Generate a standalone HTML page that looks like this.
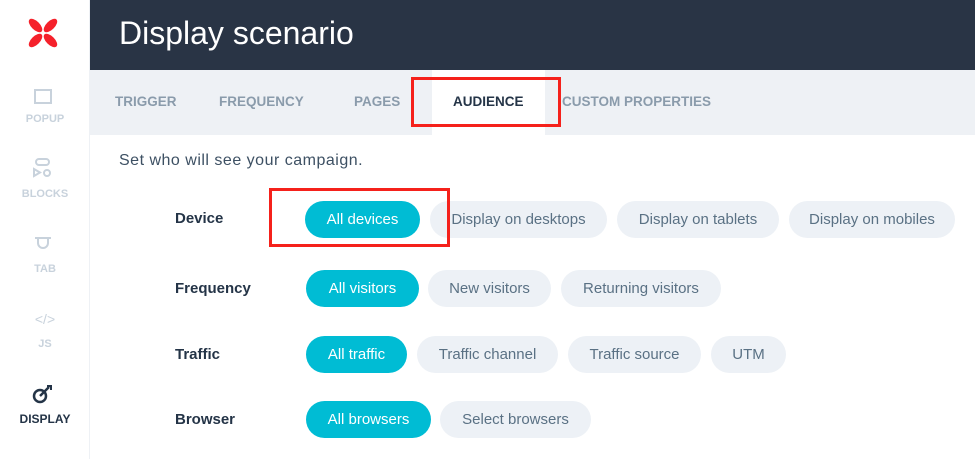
<!DOCTYPE html>
<html><head><style>
*{margin:0;padding:0;box-sizing:border-box}
body{width:975px;height:459px;overflow:hidden;background:#fff;font-family:"Liberation Sans",sans-serif;position:relative}
.abs{position:absolute}
.side{left:0;top:0;width:90px;height:459px;background:#fff;border-right:1px solid #eef1f5}
.si{position:absolute;left:0;width:90px;text-align:center;font-size:11px;font-weight:bold;color:#c8d2dc}
.hdr{left:90px;top:0;width:885px;height:70px;background:#293445;color:#fff;font-size:32px;padding-left:29px;line-height:66px}
.tabs{left:90px;top:70px;width:885px;height:65px;background:#eef1f5}
.tab{position:absolute;top:94px;font-size:13.5px;font-weight:bold;color:#8a9bab}
.pill{position:absolute;height:37px;border-radius:19px;background:#edf1f6;color:#5a7184;font-size:15px;line-height:38px;text-align:center}
.on{background:#00bcd4;color:#fff}
.lbl{position:absolute;left:175px;font-size:15px;font-weight:bold;color:#243447}
.red{position:absolute;border:3px solid #f5211b}
</style></head><body>
<div class="abs side"></div>
<svg class="abs" style="left:27px;top:17px" width="32" height="32" viewBox="0 0 30 30">
<g fill="#f5212b">
<ellipse cx="8" cy="8" rx="8" ry="4" transform="rotate(45 8 8)"/>
<ellipse cx="22" cy="8" rx="8" ry="4" transform="rotate(-45 22 8)"/>
<ellipse cx="8" cy="22" rx="8" ry="4" transform="rotate(-45 8 22)"/>
<ellipse cx="22" cy="22" rx="8" ry="4" transform="rotate(45 22 22)"/>
</g></svg>
<svg class="abs" style="left:34px;top:89px" width="18" height="16"><rect x="1" y="1" width="16" height="13" fill="none" stroke="#c8d2dc" stroke-width="2"/></svg>
<div class="si" style="top:113px">POPUP</div>
<svg class="abs" style="left:32px;top:158px" width="22" height="20" fill="none" stroke="#c8d2dc" stroke-width="2"><rect x="4" y="1" width="13" height="6" rx="3"/><path d="M2 11v7l6-3.5z"/><circle cx="15" cy="15" r="3"/></svg>
<div class="si" style="top:188px">BLOCKS</div>
<svg class="abs" style="left:34px;top:236px" width="18" height="14" fill="none" stroke="#c8d2dc" stroke-width="2"><path d="M1 2h16M4 2v5a5 5 0 0 0 10 0V2"/></svg>
<div class="si" style="top:263px">TAB</div>
<div class="si" style="top:311px;font-size:14px;font-weight:normal">&lt;/&gt;</div>
<div class="si" style="top:338px">JS</div>
<svg class="abs" style="left:32px;top:384px" width="22" height="20" fill="none" stroke="#243447" stroke-width="2.5"><circle cx="8" cy="12" r="6"/><path d="M8 12l9-9"/><path d="M15 2h4v4" stroke-width="2"/></svg>
<div class="si" style="top:412px;color:#243447;font-size:12px">DISPLAY</div>
<div class="abs hdr">Display scenario</div>
<div class="abs tabs"></div>
<div class="abs" style="left:432px;top:70px;width:113px;height:65px;background:#fff"></div>
<div class="tab" style="left:115px">TRIGGER</div>
<div class="tab" style="left:219px">FREQUENCY</div>
<div class="tab" style="left:354px">PAGES</div>
<div class="tab" style="left:453px;color:#243447">AUDIENCE</div>
<div class="tab" style="left:562px">CUSTOM PROPERTIES</div>
<div class="red" style="left:411px;top:77px;width:150px;height:50px"></div>
<div class="abs" style="left:119px;top:152px;font-size:16px;color:#3d5063;letter-spacing:0.5px">Set who will see your campaign.</div>
<div class="lbl" style="top:210px">Device</div>
<div class="pill on" style="left:305px;top:201px;width:115px">All devices</div>
<div class="pill" style="left:430px;top:201px;width:177px">Display on desktops</div>
<div class="pill" style="left:617px;top:201px;width:162px">Display on tablets</div>
<div class="pill" style="left:789px;top:201px;width:166px">Display on mobiles</div>
<div class="red" style="left:269px;top:188px;width:181px;height:59px"></div>
<div class="lbl" style="top:280px">Frequency</div>
<div class="pill on" style="left:306px;top:270px;width:113px">All visitors</div>
<div class="pill" style="left:428px;top:270px;width:123px">New visitors</div>
<div class="pill" style="left:561px;top:270px;width:160px">Returning visitors</div>
<div class="lbl" style="top:346px">Traffic</div>
<div class="pill on" style="left:306px;top:336px;width:101px">All traffic</div>
<div class="pill" style="left:417px;top:336px;width:141px">Traffic channel</div>
<div class="pill" style="left:568px;top:336px;width:133px">Traffic source</div>
<div class="pill" style="left:711px;top:336px;width:75px">UTM</div>
<div class="lbl" style="top:411px">Browser</div>
<div class="pill on" style="left:306px;top:401px;width:125px">All browsers</div>
<div class="pill" style="left:440px;top:401px;width:151px">Select browsers</div>
</body></html>
